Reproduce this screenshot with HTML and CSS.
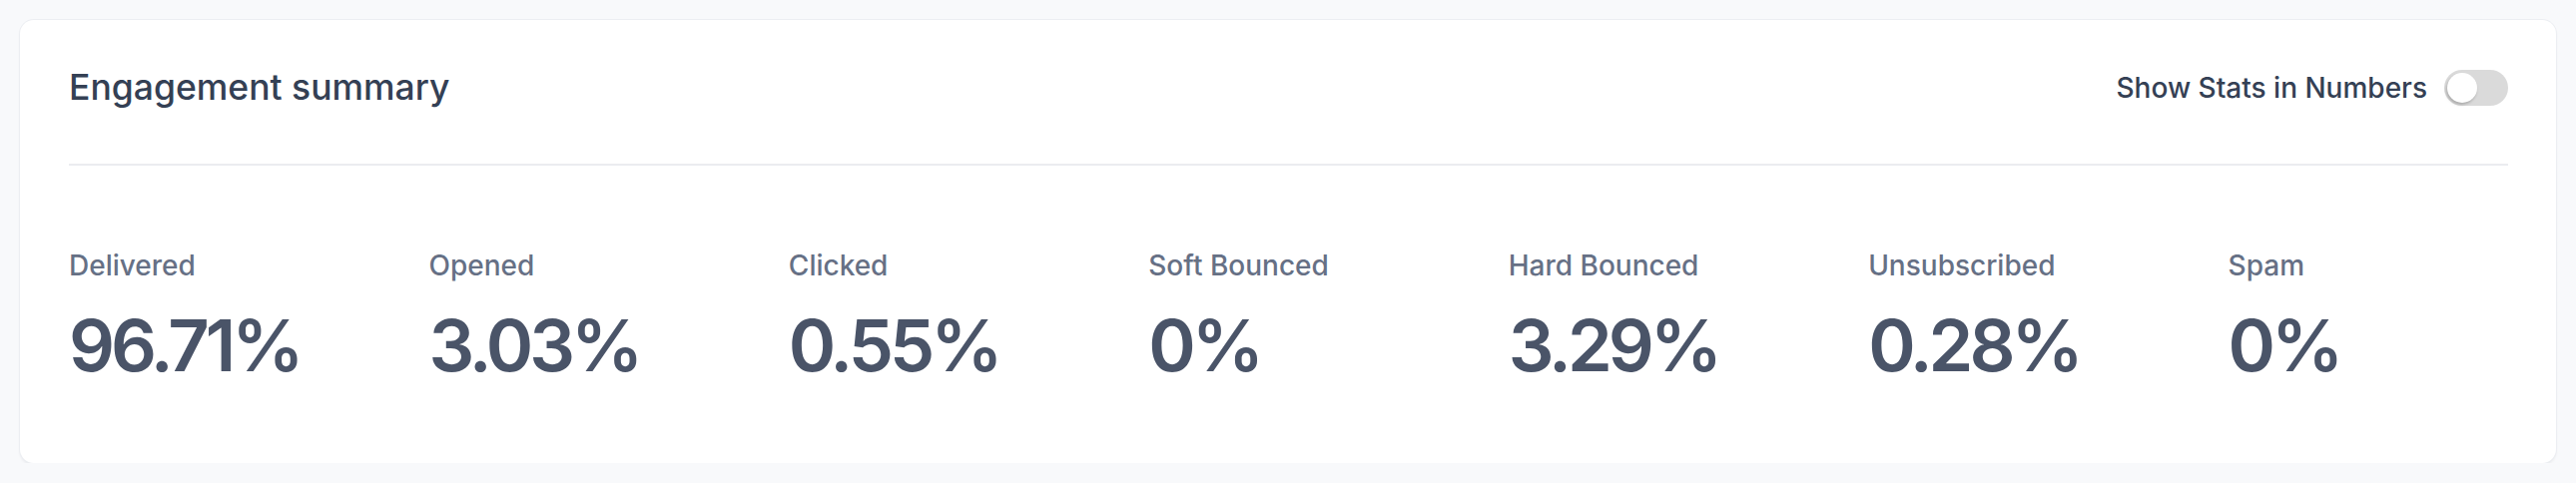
FILE: index.html
```html
<!DOCTYPE html>
<html lang="en">
<head>
<meta charset="utf-8">
<title>Engagement summary</title>
<link rel="stylesheet" href="styles.css">
</head>
<body>
<section class="card">
  <header class="card-header">
    <h2 class="card-title">Engagement summary</h2>
    <label class="toggle-wrap">
      <span class="toggle-label">Show Stats in Numbers</span>
      <span class="toggle"><span class="toggle-knob"></span></span>
    </label>
  </header>
  <hr class="divider">
  <div class="stats">
    <div class="stat"><div class="stat-label">Delivered</div><div class="stat-value">96.71%</div></div>
    <div class="stat"><div class="stat-label">Opened</div><div class="stat-value">3.03%</div></div>
    <div class="stat"><div class="stat-label">Clicked</div><div class="stat-value">0.55%</div></div>
    <div class="stat"><div class="stat-label">Soft Bounced</div><div class="stat-value">0%</div></div>
    <div class="stat"><div class="stat-label">Hard Bounced</div><div class="stat-value">3.29%</div></div>
    <div class="stat"><div class="stat-label">Unsubscribed</div><div class="stat-value">0.28%</div></div>
    <div class="stat"><div class="stat-label">Spam</div><div class="stat-value">0%</div></div>
  </div>
</section>
</body>
</html>
```
FILE: styles.css
```css
* { box-sizing: border-box; }
html, body { margin: 0; }
body {
  background: #f8f9fb;
  padding: 20px 20px 0 20px;
  font-family: Inter, "Noto Sans", "Liberation Sans", sans-serif;
}
.card {
  background: #ffffff;
  border-radius: 14px;
  box-shadow: 0 0 0 1px #eceef2, 0 2px 3px rgba(16, 24, 40, 0.08);
  padding: 48px 48px 81px 49px;
}
.card-header {
  display: flex;
  align-items: center;
  justify-content: space-between;
  height: 40px;
}
.card-title {
  margin: 0;
  font-size: 35.5px;
  line-height: 40px;
  font-weight: 500;
  color: #344054;
}
.toggle-wrap {
  display: flex;
  align-items: center;
  gap: 17px;
}
.toggle-label {
  font-size: 28px;
  line-height: 40px;
  font-weight: 500;
  color: #344054;
}
.toggle {
  width: 64px;
  height: 36px;
  border-radius: 18px;
  background: #dadada;
  padding: 3px;
  display: flex;
}
.toggle-knob {
  width: 30px;
  height: 30px;
  border-radius: 50%;
  background: #ffffff;
  box-shadow: -1px 2px 3px rgba(0, 0, 0, 0.22);
}
.divider {
  border: 0;
  height: 2px;
  background: #ebecf0;
  margin: 56px 0 84px 0;
}
.stats {
  display: grid;
  grid-template-columns: repeat(7, 1fr);
  column-gap: 80px;
}
.stat-label {
  font-size: 28px;
  line-height: 32px;
  font-weight: 500;
  color: #667085;
}
.stat-value {
  margin-top: 26px;
  font-size: 72px;
  line-height: 75px;
  font-weight: 600;
  color: #4a5468;
  letter-spacing: -4px;
}
```
